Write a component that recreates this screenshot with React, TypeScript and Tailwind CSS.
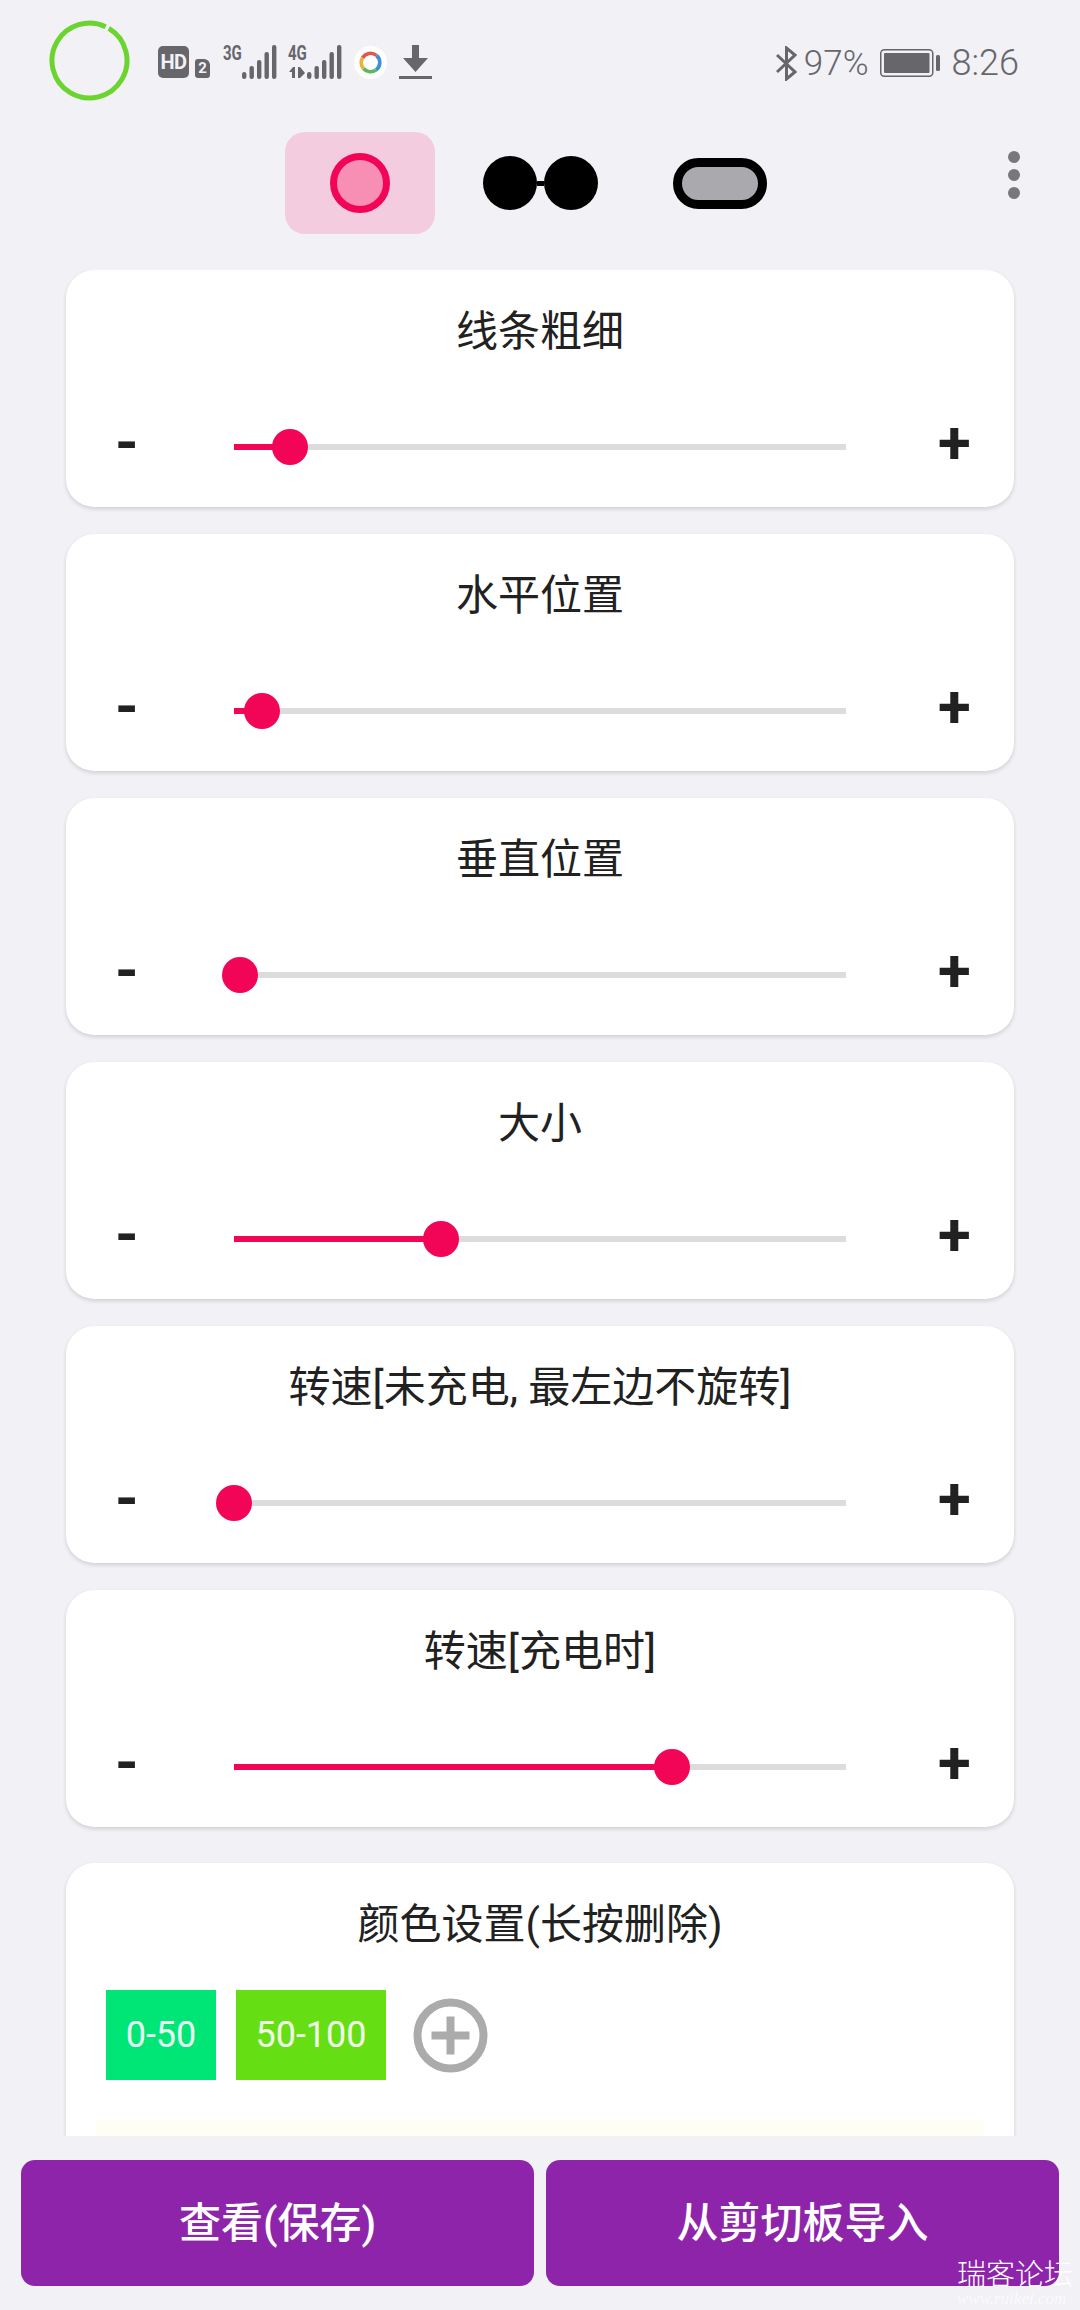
import React from 'react';

// thumb offsets are px from the start of the 612px track
const sliders = [
    { title: '线条粗细', offset: 56 },
    { title: '水平位置', offset: 28 },
    { title: '垂直位置', offset: 6 },
    { title: '大小', offset: 207 },
    { title: '转速[未充电, 最左边不旋转]', offset: 0 },
    { title: '转速[充电时]', offset: 438 },
];

const Signal = ({ label, arrows }: { label: string; arrows?: boolean }) => (
    <div className="relative w-[54px] h-[34px]">
        <svg width="54" height="34" viewBox="0 0 54 34" fill="#66666b">
            {arrows && (
                <g>
                    <path d="M1 27 L5 22 H7 V33 H4 V27 Z M10 22 H12 L17 28 L12 33 H10 Z" />
                </g>
            )}
            <rect x="19" y="27" width="4.4" height="7" rx="2.2" />
            <rect x="26.5" y="21" width="4.4" height="13" rx="2" />
            <rect x="34" y="15" width="4.4" height="19" rx="2" />
            <rect x="41.5" y="7" width="4.4" height="27" rx="2" />
            <rect x="49" y="0" width="4.4" height="34" rx="2" />
        </svg>
        <span className="absolute left-0 top-[1px] text-[20px] leading-[15px] font-bold origin-left scale-x-[0.75]">{label}</span>
    </div>
);

function StatusBar() {
    return (
        <div className="h-[120px] shrink-0 flex items-center pl-[49px] pr-[61px] text-[#66666b] font-['Roboto',sans-serif]">
            <svg width="81" height="81" viewBox="0 0 81 81">
                <circle cx="40.5" cy="40.5" r="37.5" fill="none" stroke="#6bd42f" strokeWidth="5" strokeDasharray="231.6 4" transform="rotate(-59 40.5 40.5)" />
            </svg>

            <div className="ml-[28px] mt-[4px] flex items-center">
                <div className="w-[31px] h-[32px] rounded-[5px] bg-[#66666b] flex items-center justify-center text-[#f1f1f6] text-[20px] leading-none font-bold tracking-[-0.5px]">HD</div>
                <div className="ml-[6px] mt-[12px] w-[15px] h-[19px] rounded-[3px] rounded-tr-[6px] bg-[#66666b] flex items-center justify-center text-[#f1f1f6] text-[15px] leading-none font-bold">2</div>
                <div className="ml-[13px] flex"><Signal label="3G" /></div>
                <div className="ml-[11px] flex"><Signal label="4G" arrows /></div>
                <svg className="ml-[12px]" width="33" height="33" viewBox="0 0 33 33" fill="none" strokeWidth="3.6">
                    <circle cx="16.5" cy="16.5" r="16.5" fill="#ffffff" />
                    <path d="M8.5 12 A9.2 9.2 0 0 1 22.5 9.5" stroke="#dd5a4a" />
                    <path d="M22.5 9.5 A9.2 9.2 0 0 1 22 24" stroke="#3d8fd6" />
                    <path d="M22 24 A9.2 9.2 0 0 1 9.5 22.5" stroke="#5cb85c" />
                    <path d="M9.5 22.5 A9.2 9.2 0 0 1 8.5 12" stroke="#e8b23c" />
                </svg>
                <svg className="ml-[12px]" width="33" height="34" viewBox="0 0 33 34" fill="#66666b">
                    <path d="M13 0 H20 V13 H29 L16.5 27 L4 13 H13 Z" />
                    <rect x="0" y="31" width="33" height="3" />
                </svg>
            </div>

            <div className="ml-auto mt-[6px] flex items-center text-[36px] font-light leading-none">
                <svg width="21" height="35" viewBox="0 0 21 35" fill="none" stroke="#66666b" strokeWidth="3">
                    <path d="M1 9 L19 26 L10.5 33 V2 L19 9 L1 26" />
                </svg>
                <span className="ml-[7px] text-[35px]">97%</span>
                <svg className="ml-[11px]" width="60" height="28" viewBox="0 0 60 28">
                    <rect x="0.75" y="0.75" width="52" height="26.5" rx="3.5" fill="none" stroke="#66666b" strokeWidth="1.5" />
                    <rect x="4" y="4" width="45.5" height="20" rx="1" fill="#66666b" />
                    <rect x="56" y="6" width="4" height="16" rx="1.5" fill="#66666b" />
                </svg>
                <span className="ml-[12px]">8:26</span>
            </div>
        </div>
    );
}

function ShapeTabs() {
    return (
        <div className="mt-[12px] h-[102px] shrink-0 grid grid-cols-[270px_180px_180px_180px_270px]">
            <div />
            <div className="flex items-center justify-center">
                <div className="w-[150px] h-[102px] rounded-[20px] bg-[#f3cddf] flex items-center justify-center">
                    <div className="w-[60px] h-[60px] rounded-full bg-[#f78fb5] border-[7px] border-[#f20556]" />
                </div>
            </div>
            <div className="flex items-center justify-center">
                <div className="w-[54px] h-[54px] rounded-full bg-black" />
                <div className="w-[7px] h-[5px] bg-black" />
                <div className="w-[54px] h-[54px] rounded-full bg-black" />
            </div>
            <div className="flex items-center justify-center">
                <div className="w-[94px] h-[51px] rounded-[26px] bg-[#a9a9ae] border-[9px] border-black" />
            </div>
            <div className="flex flex-col gap-[6px] pl-[198px] pt-[19px]">
                <div className="w-[12px] h-[12px] rounded-full bg-[#77777c]" />
                <div className="w-[12px] h-[12px] rounded-full bg-[#77777c]" />
                <div className="w-[12px] h-[12px] rounded-full bg-[#77777c]" />
            </div>
        </div>
    );
}

function SliderCard({ title, offset }: { title: string; offset: number }) {
    return (
        <div className="h-[237px] shrink-0 rounded-[28px] bg-white shadow-[0_2px_4px_rgba(0,0,0,0.14)] flex flex-col">
            <div className="mt-[34px] text-center text-[42px] leading-[56px] text-[#212121]">{title}</div>
            <div className="mt-[67px] h-[40px] flex items-center">
                <div className="w-[168px] pl-[49px] text-[60px] leading-[40px] font-bold text-[#212121] -mt-[8px]">-</div>
                <div className="relative flex-1 h-[6px] bg-[#dcdcdc]">
                    <div className="h-full bg-[#f20556]" style={{ width: offset }} />
                    <div className="absolute top-[-15px] w-[36px] h-[36px] ml-[-18px] rounded-full bg-[#f20556]" style={{ left: offset }} />
                </div>
                <div className="w-[168px] pl-[92px] text-[60px] leading-[40px] font-bold text-[#212121] -mt-[8px]">+</div>
            </div>
        </div>
    );
}

function ColorCard() {
    return (
        <div className="mt-[9px] h-[300px] shrink-0 rounded-t-[28px] bg-white shadow-[0_2px_4px_rgba(0,0,0,0.14)]">
            <div className="pt-[34px] text-center text-[42px] leading-[56px] text-[#212121]">颜色设置(长按删除)</div>
            <div className="mt-[37px] pl-[40px] flex items-center">
                <div className="w-[110px] h-[90px] bg-[#00e676] flex items-center justify-center text-[36px] text-white/90">0-50</div>
                <div className="ml-[20px] w-[150px] h-[90px] bg-[#66de14] flex items-center justify-center text-[36px] text-white/90">50-100</div>
                <svg className="ml-[27px]" width="75" height="75" viewBox="0 0 75 75" fill="none" stroke="#ababab" strokeWidth="8">
                    <circle cx="37.5" cy="37.5" r="33" />
                    <path d="M18.5 37.5 H56.5 M37.5 18.5 V56.5" />
                </svg>
            </div>
            <div className="mt-[40px] mx-[30px] h-[60px] bg-[#fffef4]" />
        </div>
    );
}

export default function App() {
    return (
        <div className="relative w-[1080px] h-[2310px] overflow-hidden flex flex-col bg-[#f1f1f6] font-['Roboto','Noto_Sans_CJK_SC',sans-serif]">
            <StatusBar />
            <ShapeTabs />

            <div className="mt-[36px] h-[1866px] shrink-0 overflow-hidden px-[66px] flex flex-col gap-[27px]">
                {sliders.map((s) => (
                    <SliderCard key={s.title} title={s.title} offset={s.offset} />
                ))}
                <ColorCard />
            </div>

            <div className="mt-[24px] flex gap-[12px] pl-[21px] pr-[21px]">
                <button className="flex-1 h-[126px] rounded-[14px] bg-[#8e24aa] text-white text-[42px] font-medium">查看(保存)</button>
                <button className="flex-1 h-[126px] rounded-[14px] bg-[#8e24aa] text-white text-[42px] font-medium">从剪切板导入</button>
            </div>

            {/* forum watermark */}
            <div className="absolute left-[957px] top-[2254px] w-[123px] text-white font-['Noto_Sans_CJK_SC',serif] font-light">
                <div className="text-[29px] leading-[36px] whitespace-nowrap">瑞客论坛</div>
                <div className="text-[17px] leading-[18px] italic font-['Liberation_Serif',serif] text-white/70 whitespace-nowrap">www.ruikei.com</div>
            </div>
        </div>
    );
}
